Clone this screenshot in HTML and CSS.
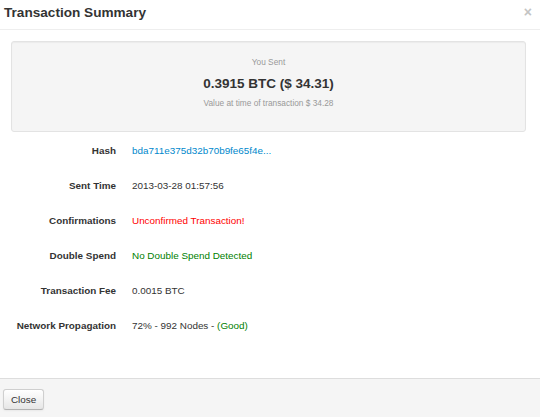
FILE: index.html
```html
<!DOCTYPE html>
<html>
<head>
<meta charset="utf-8">
<link rel="stylesheet" href="styles.css">
</head>
<body>
<div class="modal">
  <div class="modal-header">
    <h3 class="title">Transaction Summary</h3>
    <span class="close">&times;</span>
  </div>
  <div class="modal-body">
    <div class="well">
      <div class="sent-label">You Sent</div>
      <div class="amount">0.3915 BTC ($ 34.31)</div>
      <div class="value-note">Value at time of transaction $ 34.28</div>
    </div>
    <div class="details">
      <div class="row"><div class="label">Hash</div><div class="value"><a class="link" href="#">bda711e375d32b70b9fe65f4e...</a></div></div>
      <div class="row"><div class="label">Sent Time</div><div class="value">2013-03-28 01:57:56</div></div>
      <div class="row"><div class="label">Confirmations</div><div class="value red">Unconfirmed Transaction!</div></div>
      <div class="row"><div class="label">Double Spend</div><div class="value green">No Double Spend Detected</div></div>
      <div class="row"><div class="label">Transaction Fee</div><div class="value">0.0015 BTC</div></div>
      <div class="row"><div class="label">Network Propagation</div><div class="value">72% - 992 Nodes - <span class="green">(Good)</span></div></div>
    </div>
  </div>
  <div class="modal-footer">
    <button class="btn">Close</button>
  </div>
</div>
</body>
</html>
```

FILE: styles.css
```css
html, body {
  margin: 0;
  padding: 0;
  background: #fff;
}
body {
  font-family: "Liberation Sans", Arial, Helvetica, sans-serif;
  font-size: 9.9px;
  color: #333;
}
.modal {
  width: 540px;
  height: 417px;
  display: flex;
  flex-direction: column;
  background: #fff;
}
.modal-header {
  height: 29px;
  border-bottom: 1px solid #eee;
  display: flex;
  align-items: center;
  justify-content: space-between;
  padding: 0 8px 0 4px;
  flex-shrink: 0;
}
.title {
  margin: 0;
  font-size: 13.6px;
  font-weight: bold;
  color: #333;
  line-height: 18px;
  position: relative;
  top: -2px;
}
.close {
  font-size: 14px;
  font-weight: bold;
  color: #c4c4c4;
  line-height: 14px;
  position: relative;
  top: -3px;
}
.modal-body {
  flex: 1;
  padding: 11px 14px 0 11px;
}
.well {
  height: 91px;
  box-sizing: border-box;
  background: #f5f5f5;
  border: 1px solid #e3e3e3;
  border-radius: 3px;
  box-shadow: inset 0 1px 1px rgba(0,0,0,0.04);
  text-align: center;
  padding-top: 14px;
}
.sent-label {
  font-size: 8.3px;
  line-height: 12px;
  color: #999;
}
.amount {
  margin-top: 6px;
  font-size: 13.5px;
  font-weight: bold;
  line-height: 20px;
  color: #333;
}
.value-note {
  margin-top: 2.5px;
  font-size: 8.3px;
  line-height: 12px;
  color: #999;
}
.details {
  margin-top: 1px;
  margin-left: -11px;
}
.row {
  height: 35px;
  display: flex;
  align-items: center;
  gap: 16px;
}
.label {
  width: 116px;
  text-align: right;
  font-weight: bold;
  color: #333;
}
.value {
  color: #333;
}
.link {
  color: #0088cc;
  text-decoration: none;
}
.red {
  color: #ff0000;
}
.green {
  color: #008000;
}
.modal-footer {
  height: 38px;
  border-top: 1px solid #ddd;
  background: #f5f5f5;
  display: flex;
  align-items: center;
  padding-left: 3px;
  flex-shrink: 0;
}
.btn {
  width: 41px;
  height: 21px;
  padding: 0;
  font-family: "Liberation Sans", Arial, Helvetica, sans-serif;
  font-size: 9.9px;
  color: #333;
  background: linear-gradient(#ffffff, #e6e6e6);
  border: 1px solid #cfcfcf;
  border-bottom-color: #b3b3b3;
  border-radius: 3px;
  box-shadow: inset 0 1px 0 rgba(255,255,255,0.2), 0 1px 2px rgba(0,0,0,0.05);
  position: relative;
  top: 1px;
}
```
